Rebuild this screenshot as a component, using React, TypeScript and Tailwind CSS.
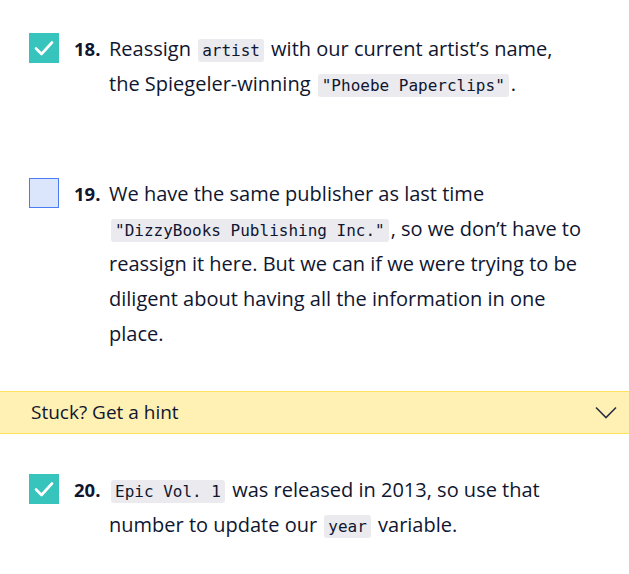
import { ReactNode } from "react";

const Code = ({ children }: { children: ReactNode }) => (
  <code className="mx-[2px] rounded-[3px] bg-[#eaeaef] px-[4px] py-[2px] font-['DejaVu_Sans_Mono',monospace] text-[16px] leading-none text-[#10162f]">
    {children}
  </code>
);

const Check = ({ done }: { done: boolean }) =>
  done ? (
    <div className="mt-[2px] flex h-[30px] w-[30px] shrink-0 items-center justify-center bg-[#37c4bd]">
      <svg width="20" height="16" viewBox="0 0 20 16" fill="none">
        <path d="M2 8.5 L7.5 14 L18 2.5" stroke="white" strokeWidth="2.6" strokeLinecap="round" strokeLinejoin="round" />
      </svg>
    </div>
  ) : (
    <div className="mt-[2px] h-[30px] w-[30px] shrink-0 border border-[#4a7cf3] bg-[#dbe5fb]" />
  );

// numbered checklist step
const Task = ({ n, done, children }: { n: number; done: boolean; children: ReactNode }) => (
  <div className="flex pl-[29px] pr-[6px]">
    <Check done={done} />
    <span className="ml-[15px] w-[35px] shrink-0 text-[18.5px] font-bold leading-[35px]">{n}.</span>
    <p className="text-[20px] leading-[35px]">{children}</p>
  </div>
);

export default function App() {
  return (
    <div className="min-h-[574px] bg-white pt-[31px] font-['Open_Sans',sans-serif] text-[#10162f]">
      <Task n={18} done>
        Reassign <Code>artist</Code> with our current artist’s name,
        <br />
        the Spiegeler-winning <Code>"Phoebe Paperclips"</Code>.
      </Task>

      <div className="mt-[75px]">
        <Task n={19} done={false}>
          We have the same publisher as last time
          <br />
          <Code>"DizzyBooks Publishing Inc."</Code>, so we don’t have to
          <br />
          reassign it here. But we can if we were trying to be
          <br />
          diligent about having all the information in one
          <br />
          place.
        </Task>
      </div>

      <button className="mt-[40px] flex h-[43px] w-full items-center justify-between border-y border-[#ffe15c] bg-[#fff0b3] pl-[31px] pr-[12px] text-left text-[19px]">
        <span>Stuck? Get a hint</span>
        <svg width="22" height="13" viewBox="0 0 22 13" fill="none">
          <path d="M1 1.5 L11 11.5 L21 1.5" stroke="#2b2f45" strokeWidth="1.6" />
        </svg>
      </button>

      <div className="mt-[38px]">
        <Task n={20} done>
          <Code>Epic Vol. 1</Code> was released in 2013, so use that
          <br />
          number to update our <Code>year</Code> variable.
        </Task>
      </div>
    </div>
  );
}
